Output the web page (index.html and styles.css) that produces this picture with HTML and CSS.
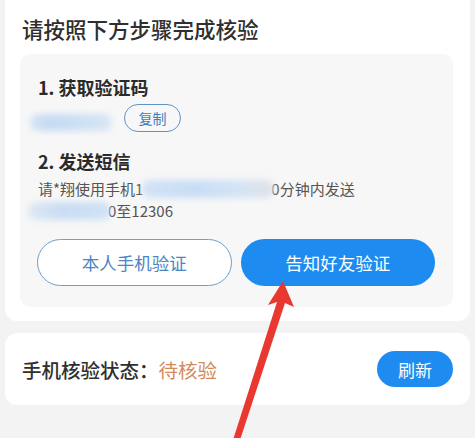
FILE: index.html
```html
<!DOCTYPE html>
<html lang="zh-CN">
<head>
<meta charset="utf-8">
<title>核验</title>
<link rel="stylesheet" href="styles.css">
</head>
<body>
<div class="page">
  <section class="card">
    <h1 class="title">请按照下方步骤完成核验</h1>
    <div class="steps">
      <h2 class="step-title">1. 获取验证码</h2>
      <div class="code-row">
        <span class="blur blur-code"></span>
        <button class="copy">复制</button>
      </div>
      <h2 class="step-title step2">2. 发送短信</h2>
      <p class="desc">请*翔使用手机1<span class="blur blur-phone"></span>0分钟内发送<br><span class="blur blur-sms"></span>0至12306</p>
      <div class="actions">
        <button class="btn btn-outline">本人手机验证</button>
        <button class="btn btn-fill">告知好友验证</button>
      </div>
    </div>
  </section>
  <section class="status">
    <div class="status-text">手机核验状态：<span class="pending">待核验</span></div>
    <button class="refresh">刷新</button>
  </section>
  <svg class="arrow" width="475" height="438" viewBox="0 0 475 438">
    <polygon points="283,281 294,307 285,303 240,440 233,440 277,302 268,305" fill="#e8382f"/>
  </svg>
</div>
</body>
</html>
```

FILE: styles.css
```css
* { box-sizing: border-box; }
html, body {
  margin: 0;
  padding: 0;
  background: #f3f3f3;
}
body {
  font-family: "Noto Sans CJK SC", "Noto Sans", sans-serif;
  color: #333;
}
.page {
  position: relative;
  width: 475px;
  height: 438px;
  overflow: hidden;
}
.card {
  margin: 0 5px;
  background: #fff;
  border-radius: 0 0 12px 12px;
  padding: 14px 17px 14px 15px;
}
.title {
  margin: 0 0 10px 2px;
  font-size: 21.5px;
  line-height: 30px;
  font-weight: 500;
  color: #2f2f2f;
}
.steps {
  background: #f7f7f7;
  border-radius: 10px;
  padding: 20px 18px 21px 17px;
}
.step-title {
  margin: 0 0 0 1px;
  font-size: 18px;
  line-height: 26px;
  font-weight: 700;
  color: #2a2a2a;
}
.step2 { margin-top: 16px; }
.code-row {
  display: flex;
  align-items: center;
  height: 28px;
  margin-top: 4px;
}
.blur {
  display: inline-block;
  filter: blur(3px);
  border-radius: 8px;
}
.blur-code {
  width: 82px;
  height: 17px;
  margin-left: -7px;
  margin-top: 8px;
  background: linear-gradient(90deg, #d6e4f3 0%, #c4dbf3 25%, #cde0f4 60%, #d9e6f2 100%);
}
.copy {
  margin-left: 12px;
  width: 57px;
  height: 28px;
  border: 1.5px solid #5f93c6;
  border-radius: 14px;
  background: transparent;
  color: #3d7ec3;
  font-family: inherit;
  font-size: 14px;
  padding: 0;
}
.desc {
  margin: 4px 0 0 1px;
  font-size: 15px;
  line-height: 22px;
  color: #555;
}
.desc .blur {
  height: 18px;
  vertical-align: -3px;
}
.blur-phone {
  width: 132px;
  margin: 0 -3px 0 -1px;
  background: linear-gradient(90deg, #d3e3f5 0%, #c8ddf5 40%, #d4e4f4 75%, #e0e3e8 100%);
}
.blur-sms {
  width: 82px;
  margin: 0 -2px 0 -10px;
  background: linear-gradient(90deg, #dfe8f2 0%, #c9ddf4 40%, #cfe1f4 100%);
}
.actions {
  display: grid;
  grid-template-columns: 1fr 1fr;
  gap: 9px;
  margin-top: 17px;
}
.btn {
  height: 47px;
  border-radius: 24px;
  font-family: inherit;
  font-size: 17.5px;
  padding: 0;
}
.btn-outline {
  background: #fff;
  border: 1.5px solid #6f9fcb;
  color: #4a86c2;
}
.btn-fill {
  background: #1d8bef;
  border: none;
  color: #fff;
}
.status {
  margin: 12px 5px 0;
  height: 72px;
  background: #fff;
  border-radius: 12px;
  display: flex;
  align-items: center;
  justify-content: space-between;
  padding: 0 17px 0 17px;
}
.status-text {
  font-size: 19.5px;
  font-weight: 500;
  color: #2f2f2f;
}
.pending { color: #d38a5c; font-weight: 400; }
.refresh {
  width: 76px;
  height: 36px;
  border: none;
  border-radius: 18px;
  background: #1d8bef;
  color: #fff;
  font-family: inherit;
  font-size: 17px;
  padding: 0;
}
.arrow {
  position: absolute;
  left: 0;
  top: 0;
  pointer-events: none;
}
```
